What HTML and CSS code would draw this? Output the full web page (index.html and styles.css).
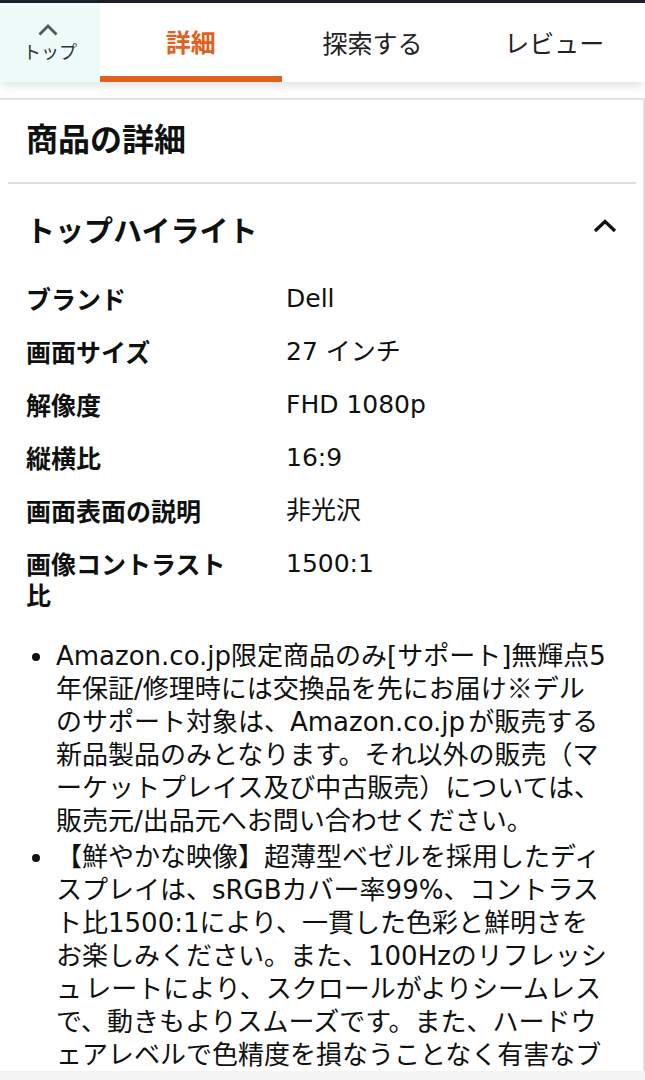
FILE: index.html
```html
<!DOCTYPE html>
<html lang="ja">
  <head>
    <meta charset="UTF-8" />
    <meta name="viewport" content="width=device-width, initial-scale=1.0" />
    <title>商品の詳細</title>
    <link rel="stylesheet" href="styles.css">
  </head>
  <body>
    <div class="status-line"></div>

    <nav class="tabs">
      <div class="tab-top">
        <svg class="chevron-small" width="22" height="14" viewBox="0 0 22 14">
          <path d="M2.5 11.5 L11 3 L19.5 11.5" fill="none" stroke="#555" stroke-width="2.8" />
        </svg>
        <span>トップ</span>
      </div>
      <div class="tab active">詳細</div>
      <div class="tab">探索する</div>
      <div class="tab">レビュー</div>
    </nav>
    <div class="tabs-rule"></div>

    <main class="page">
      <h1 class="page-title">商品の詳細</h1>
      <div class="divider"></div>

      <section class="highlights">
        <div class="highlights-head">
          <h2>トップハイライト</h2>
          <svg width="24" height="14" viewBox="0 0 24 14">
            <path d="M2 12 L12 2.5 L22 12" fill="none" stroke="#111" stroke-width="3.2" />
          </svg>
        </div>

        <div class="spec-table">
          <div class="spec-label">ブランド</div>
          <div class="spec-value">Dell</div>
          <div class="spec-label">画面サイズ</div>
          <div class="spec-value">27 インチ</div>
          <div class="spec-label">解像度</div>
          <div class="spec-value">FHD 1080p</div>
          <div class="spec-label">縦横比</div>
          <div class="spec-value">16:9</div>
          <div class="spec-label">画面表面の説明</div>
          <div class="spec-value">非光沢</div>
          <div class="spec-label">画像コントラスト比</div>
          <div class="spec-value">1500:1</div>
        </div>

        <ul class="bullets">
          <li>Amazon.co.jp限定商品のみ[サポート]無輝点5年保証/修理時には交換品を先にお届け<span class="cjk">※</span>デルのサポート対象は、Amazon.co.jp が販売する新品製品のみとなります。それ以外の販売（マーケットプレイス及び中古販売）については、販売元/出品元へお問い合わせください。</li>
          <li>【鮮やかな映像】超薄型ベゼルを採用したディスプレイは、sRGBカバー率99%、コントラスト比1500:1により、一貫した色彩と鮮明さをお楽しみください。また、100Hzのリフレッシュ レートにより、スクロールがよりシームレスで、動きもよりスムーズです。また、ハードウェアレベルで色精度を損なうことなく有害なブルーライトを低減します。</li>
        </ul>
      </section>
    </main>
  </body>
</html>
```

FILE: styles.css
```css
html, body {
  margin: 0;
  padding: 0;
}

body {
  font-family: "Noto Sans CJK JP", sans-serif;
  color: #0f1111;
  background-color: #f3f3f3;
  height: 1080px;
  overflow: hidden;
}

h1, h2, ul {
  margin: 0;
}

.status-line {
  height: 3px;
  background-color: #1b2029;
}

.tabs {
  position: relative;
  z-index: 2;
  display: grid;
  grid-template-columns: 100px repeat(3, 1fr);
  height: 79px;
  background-color: white;
  box-shadow: 0 5px 10px -2px rgba(0, 0, 0, 0.13);
}

.tab-top {
  display: flex;
  flex-flow: column;
  align-items: center;
  background-color: #effbf8;
  padding-top: 20px;
  color: #333;
  font-size: 18px;
  line-height: 22px;
}

.chevron-small {
  margin-left: -4px;
  margin-bottom: 3px;
}

.tab {
  display: flex;
  justify-content: center;
  padding-top: 22px;
  font-size: 25px;
  line-height: 34px;
  color: #222;
  box-sizing: border-box;
}

.tab.active {
  color: #e0611c;
  font-weight: 700;
  border-bottom: 6px solid #e0611c;
  padding-top: 21px;
}

.tabs-rule {
  padding-top: 16px;
  border-bottom: 2px solid #e4e4e4;
  background-color: white;
}

.page {
  border-right: 2px solid #e0e0e0;
  height: 971px;
  overflow: hidden;
  box-sizing: border-box;
  background-color: white;
}

.page-title {
  padding: 17px 26px 25px;
  font-size: 32px;
  line-height: 40px;
  font-weight: 700;
}

.divider {
  height: 2px;
  margin: 0 7px 0 8px;
  background-color: #dddddd;
}

.highlights {
  padding: 25px 26px 0;
}

.highlights-head {
  display: flex;
  justify-content: space-between;
  align-items: center;
  height: 40px;
}

.highlights-head h2 {
  font-size: 29px;
  line-height: 40px;
  font-weight: 700;
}

.highlights-head svg {
  margin-top: -6px;
}

.spec-table {
  display: grid;
  grid-template-columns: 222px 1fr;
  column-gap: 38px;
  margin-top: 23px;
  font-size: 25px;
  line-height: 31px;
}

.spec-label,
.spec-value {
  padding: 11px 0;
}

.spec-label {
  font-weight: 700;
}

.spec-value {
  font-family: "DejaVu Sans", "Noto Sans CJK JP", sans-serif;
}

.bullets {
  margin-top: 19px;
  padding-left: 30px;
  padding-right: 9px;
  list-style: none;
  font-family: "DejaVu Sans", "Noto Sans CJK JP", sans-serif;
  font-size: 26px;
  line-height: 33px;
  word-spacing: -5px;
}

.bullets .cjk {
  font-family: "Noto Sans CJK JP", sans-serif;
  line-height: 1;
}

.bullets li {
  position: relative;
  margin-bottom: 3px;
}

.bullets li::before {
  content: "";
  position: absolute;
  left: -24px;
  top: 13px;
  width: 8px;
  height: 8px;
  border-radius: 50%;
  background-color: #0f1111;
}
```
